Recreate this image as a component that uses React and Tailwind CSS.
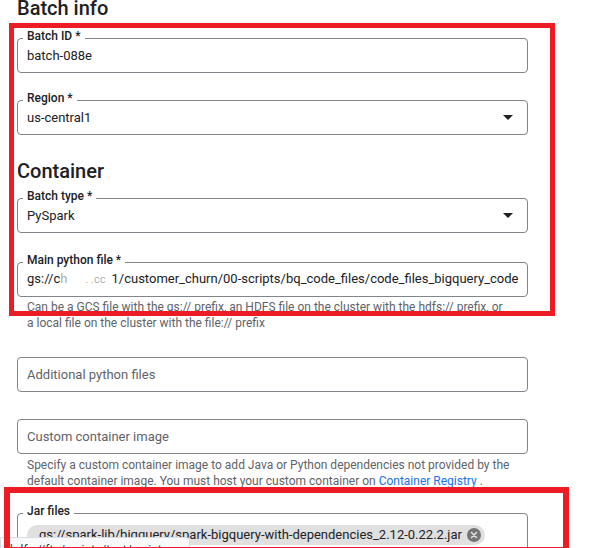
import React from 'react';

const Field = ({ label, children, dropdown, className = '' }) => (
  <div className={`relative h-[35px] rounded-[4px] border border-[#80868b] ${className}`}>
    {label && (
      <span className="absolute -top-[11px] left-[5px] bg-white px-[4px] text-[12px] font-medium leading-4 text-[#202124]">
        {label}
      </span>
    )}
    <div className="flex h-full items-center justify-between overflow-hidden pl-[9px] pr-[9px]">
      <div className="min-w-0 flex-1 overflow-hidden whitespace-nowrap text-[13px] leading-5">{children}</div>
      {dropdown && (
        <span className="mr-[5px] h-0 w-0 border-x-[5px] border-t-[5px] border-x-transparent border-t-[#202124]" />
      )}
    </div>
  </div>
);

const Helper = ({ children }) => (
  <p className="pl-[10px] text-[12px] leading-4 text-[#5f6368]">{children}</p>
);

const Heading = ({ children, className = '' }) => (
  <h2 className={`text-[20px] font-medium leading-7 text-[#202124] ${className}`}>{children}</h2>
);

export default function App() {
  return (
    <div className="relative h-[548px] w-[602px] overflow-hidden bg-white font-['Roboto','Liberation_Sans',sans-serif] text-[#202124]">
      <div className="w-[528px] pl-[17px]">
        {/* Batch info */}
        <Heading className="-mt-[6px]">Batch info</Heading>
        <Field label="Batch ID *" className="mt-[16px]">
          <span>batch-088e</span>
        </Field>
        <Field label="Region *" dropdown className="mt-[27px]">
          <span>us-central1</span>
        </Field>

        {/* Container */}
        <Heading className="mt-[22px]">Container</Heading>
        <Field label="Batch type *" dropdown className="mt-[13px]">
          <span>PySpark</span>
        </Field>
        <Field label="Main python file *" className="mt-[29px]">
          <span>gs://c</span>
          <span className="text-[#202124]/40">h</span>
          <span className="inline-block w-[18px]" />
          <span className="text-[11px] text-[#202124]/40">. .cc</span>
          <span className="inline-block w-[6px]" />
          <span>1/customer_churn/00-scripts/bq_code_files/code_files_bigquery_code_v1.py</span>
        </Field>
        <div className="mt-[2px]">
          <Helper>
            Can be a GCS file with the gs:// prefix, an HDFS file on the cluster with the hdfs:// prefix, or
            <br />
            a local file on the cluster with the file:// prefix
          </Helper>
        </div>

        <Field className="mt-[26px]">
          <span className="text-[#5f6368]">Additional python files</span>
        </Field>
        <Field className="mt-[27px]">
          <span className="text-[#5f6368]">Custom container image</span>
        </Field>
        <div className="mt-[3px]">
          <Helper>
            Specify a custom container image to add Java or Python dependencies not provided by the
            <br />
            default container image. You must host your custom container on{' '}
            <span className="text-[#1a73e8]">Container Registry</span> .
          </Helper>
        </div>

        {/* Jar files */}
        <div className="relative mt-[24px] h-[44px] rounded-[4px] border border-[#80868b]">
          <span className="absolute -top-[11px] left-[5px] bg-white px-[4px] text-[12px] font-medium leading-4 text-[#202124]">
            Jar files
          </span>
          <div className="pl-[9px] pt-[8px]">
            <div className="inline-flex h-[20px] items-center gap-[5px] rounded-full bg-[#e0e0e0] pl-[12px] pr-[4px]">
              <span className="whitespace-nowrap text-[13px] leading-5 text-[#202124]">
                gs://spark-lib/bigquery/spark-bigquery-with-dependencies_2.12-0.22.2.jar
              </span>
              <span className="flex h-[14px] w-[14px] items-center justify-center rounded-full bg-[#757575]">
                <svg width="8" height="8" viewBox="0 0 8 8">
                  <path d="M1.5 1.5 L6.5 6.5 M6.5 1.5 L1.5 6.5" stroke="#e0e0e0" strokeWidth="1.6" strokeLinecap="round" />
                </svg>
              </span>
            </div>
          </div>
        </div>
      </div>

      {/* status bar tooltip */}
      <div className="absolute left-0 top-[537px] h-[22px] w-[190px] overflow-hidden rounded-tr-[4px] border border-[#dadce0] bg-[#f8f9fa] pl-[9px] text-[12px] leading-4 text-[#3c4043]">
        <span className="relative top-[4px]">hdfs://ftp/scripts/test/script</span>
      </div>

      {/* annotation boxes */}
      <div className="pointer-events-none absolute left-[9px] top-[23px] h-[293px] w-[546px] border-[5px] border-[#ed1c24]" />
      <div className="pointer-events-none absolute left-[4px] top-[487px] h-[66px] w-[565px] border-[6px] border-[#ed1c24]" />
    </div>
  );
}
